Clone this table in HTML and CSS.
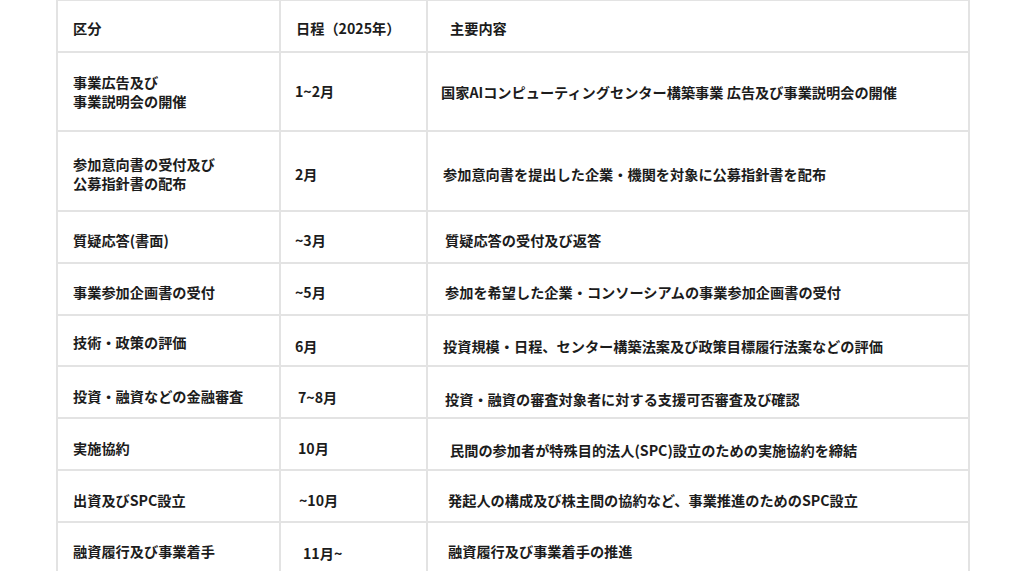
FILE: index.html
```html
<!DOCTYPE html>
<html lang="ja">
<head>
<meta charset="utf-8">
<title>事業推進日程</title>
<link rel="stylesheet" href="styles.css">
</head>
<body>
<table class="schedule">
  <colgroup>
    <col class="col-kind">
    <col class="col-date">
    <col class="col-desc">
  </colgroup>
  <thead>
    <tr class="row-head">
      <th class="c1">区分</th>
      <th class="c2 in1">日程（2025年）</th>
      <th class="c3 in7">主要内容</th>
    </tr>
  </thead>
  <tbody>
    <tr class="row-tall">
      <td class="c1 pt0">事業広告及び<br>事業説明会の開催</td>
      <td class="c2 pt0">1~2月</td>
      <td class="c3 pt2 out2">国家AIコンピューティングセンター構築事業 広告及び事業説明会の開催</td>
    </tr>
    <tr class="row-tall row-tall2">
      <td class="c1 pt6">参加意向書の受付及び<br>公募指針書の配布</td>
      <td class="c2 pt6">2月</td>
      <td class="c3 pt6">参加意向書を提出した企業・機関を対象に公募指針書を配布</td>
    </tr>
    <tr class="row-std">
      <td class="c1 pt6">質疑応答(書面)</td>
      <td class="c2 pt6">~3月</td>
      <td class="c3 pt6 in2">質疑応答の受付及び返答</td>
    </tr>
    <tr class="row-std">
      <td class="c1 pt7">事業参加企画書の受付</td>
      <td class="c2 pt7">~5月</td>
      <td class="c3 pt7 in2">参加を希望した企業・コンソーシアムの事業参加企画書の受付</td>
    </tr>
    <tr class="row-std row-slim">
      <td class="c1 pt3">技術・政策の評価</td>
      <td class="c2 pt11">6月</td>
      <td class="c3 pt11">投資規模・日程、センター構築法案及び政策目標履行法案などの評価</td>
    </tr>
    <tr class="row-std">
      <td class="c1 pt9">投資・融資などの金融審査</td>
      <td class="c2 pt11 in3">7~8月</td>
      <td class="c3 pt14 in2">投資・融資の審査対象者に対する支援可否審査及び確認</td>
    </tr>
    <tr class="row-std">
      <td class="c1 pt9">実施協約</td>
      <td class="c2 pt9 in3">10月</td>
      <td class="c3 pt12 in7">民間の参加者が特殊目的法人(SPC)設立のための実施協約を締結</td>
    </tr>
    <tr class="row-std">
      <td class="c1 pt8">出資及びSPC設立</td>
      <td class="c2 pt9 in4">~10月</td>
      <td class="c3 pt8 in5">発起人の構成及び株主間の協約など、事業推進のためのSPC設立</td>
    </tr>
    <tr class="row-last">
      <td class="c1 pt9">融資履行及び事業着手</td>
      <td class="c2 pt12 in8">11月~</td>
      <td class="c3 pt8 in5">融資履行及び事業着手の推進</td>
    </tr>
  </tbody>
</table>
</body>
</html>
```
FILE: styles.css
```css
html, body {
  margin: 0;
  padding: 0;
  background: #ffffff;
}

body {
  width: 1024px;
  height: 576px;
  overflow: hidden;
  font-family: "Noto Sans CJK JP", "Noto Sans", sans-serif;
  color: #1c1c1c;
}

.schedule {
  border-collapse: collapse;
  table-layout: fixed;
  width: 912px;
  margin: -1px 0 0 56px;
  font-size: 14.2px;
  font-weight: 700;
  line-height: 19px;
}

.col-kind { width: 223px; }
.col-date { width: 147px; }
.col-desc { width: 542px; }

.schedule th,
.schedule td {
  border: 2px solid #e3e3e3;
  text-align: left;
  vertical-align: middle;
  white-space: nowrap;
  padding: 0;
  font-weight: 700;
}

.schedule .c1 { padding-left: 15px; }
.schedule .c2 { padding-left: 14px; }
.schedule .c3 { padding-left: 15px; }

.row-head { height: 52px; }
.row-head th { padding-top: 5px; }
.row-tall { height: 79px; }
.row-tall2 { height: 80px; }
.row-std { height: 52px; }
.row-slim { height: 51px; }
.row-last { height: 49px; }
.row-last td { border-bottom: none; }

.schedule .pt0 { padding-top: 0; }
.schedule .pt2 { padding-top: 2px; }
.schedule .pt3 { padding-top: 3px; }
.schedule .pt6 { padding-top: 6px; }
.schedule .pt7 { padding-top: 7px; }
.schedule .pt8 { padding-top: 8px; }
.schedule .pt9 { padding-top: 9px; }
.schedule .pt11 { padding-top: 11px; }
.schedule .pt12 { padding-top: 12px; }
.schedule .pt14 { padding-top: 14px; }

.in1 { text-indent: 1px; }
.in2 { text-indent: 2px; }
.in3 { text-indent: 3px; }
.in4 { text-indent: 4px; }
.in5 { text-indent: 5px; }
.in7 { text-indent: 7px; }
.in8 { text-indent: 8px; }
.out2 { text-indent: -2px; }
```
